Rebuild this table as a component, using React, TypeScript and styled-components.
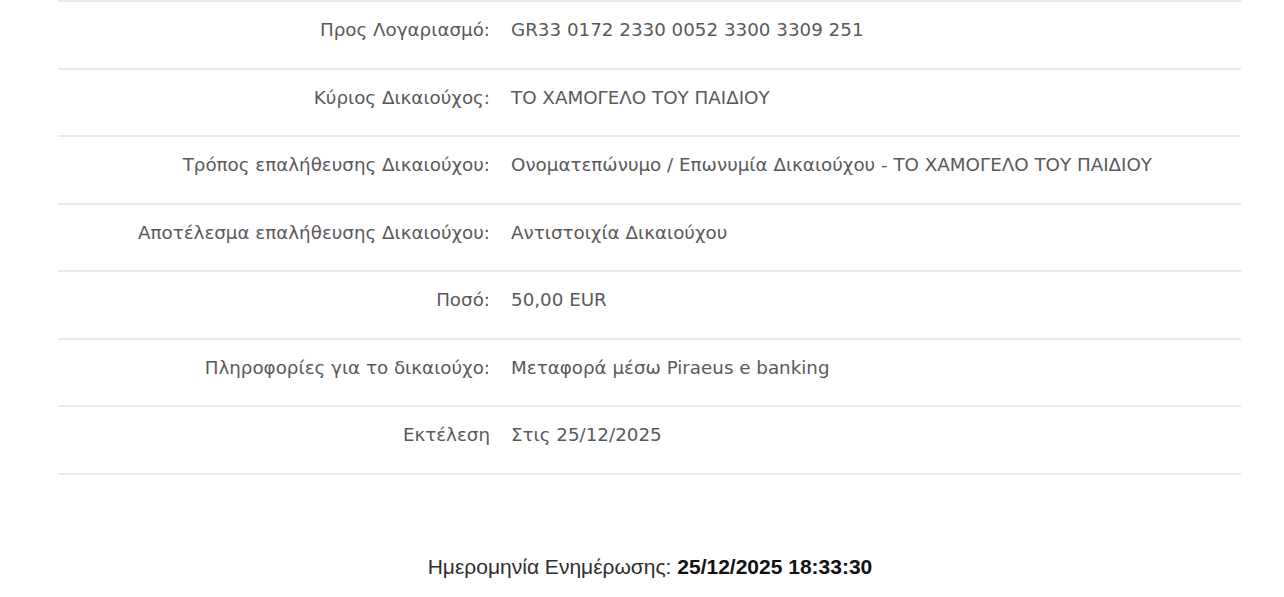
import React from 'react'
import styled, { createGlobalStyle } from 'styled-components'

const GlobalStyle = createGlobalStyle`
  html, body {
    margin: 0;
    padding: 0;
    background: #ffffff;
  }
`

const rows = [
  { label: 'Προς Λογαριασμό:', value: 'GR33 0172 2330 0052 3300 3309 251' },
  { label: 'Κύριος Δικαιούχος:', value: 'ΤΟ ΧΑΜΟΓΕΛΟ ΤΟΥ ΠΑΙΔΙΟΥ' },
  { label: 'Τρόπος επαλήθευσης Δικαιούχου:', value: 'Ονοματεπώνυμο / Επωνυμία Δικαιούχου - ΤΟ ΧΑΜΟΓΕΛΟ ΤΟΥ ΠΑΙΔΙΟΥ' },
  { label: 'Αποτέλεσμα επαλήθευσης Δικαιούχου:', value: 'Αντιστοιχία Δικαιούχου' },
  { label: 'Ποσό:', value: '50,00 EUR' },
  { label: 'Πληροφορίες για το δικαιούχο:', value: 'Μεταφορά μέσω Piraeus e banking' },
  { label: 'Εκτέλεση', value: 'Στις 25/12/2025' },
]

const Page = styled.div`
  width: 1284px;
  height: 597px;
  overflow: hidden;
  background: #fff;
`

const Table = styled.div`
  margin: 0 43px 0 58px;
  border-top: 2px solid #e9e9e9;
`

const Row = styled.div`
  display: grid;
  grid-template-columns: 432px 1fr;
  column-gap: 21px;
  height: 65.5px;
  box-sizing: content-box;
  padding-top: 17px;
  border-bottom: 2px solid #e9e9e9;
  box-sizing: border-box;
  height: 67.5px;
  font-family: 'DejaVu Sans', Verdana, sans-serif;
  font-size: 18.3px;
  line-height: 22px;
  color: #5a5a5a;
`

const Label = styled.div`
  text-align: right;
  white-space: nowrap;
`

const Value = styled.div`
  white-space: nowrap;
`

const Updated = styled.div`
  margin-top: 80px;
  text-align: center;
  font-family: 'Liberation Sans', Arial, sans-serif;
  font-size: 21px;
  line-height: 24px;
  color: #2e2e2e;
  padding-left: 16px;
`

const Stamp = styled.span`
  font-weight: bold;
  color: #111;
`

export default function App() {
  return (
    <Page>
      <GlobalStyle />
      <Table>
        {rows.map((r) => (
          <Row key={r.label}>
            <Label>{r.label}</Label>
            <Value>{r.value}</Value>
          </Row>
        ))}
      </Table>
      <Updated>
        Ημερομηνία Ενημέρωσης: <Stamp>25/12/2025 18:33:30</Stamp>
      </Updated>
    </Page>
  )
}
